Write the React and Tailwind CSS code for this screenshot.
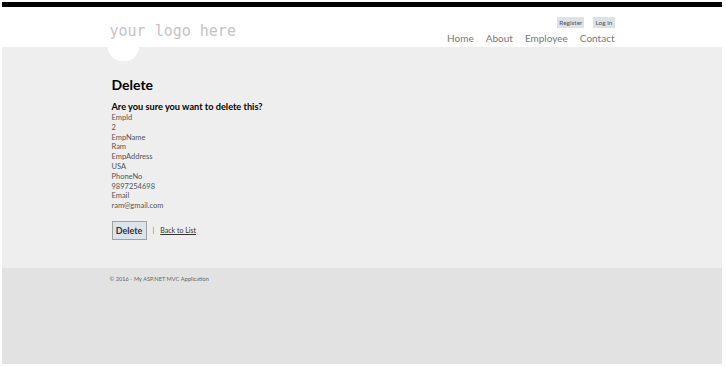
import React from 'react';

const fields = [
  ['EmpId', '2'],
  ['EmpName', 'Ram'],
  ['EmpAddress', 'USA'],
  ['PhoneNo', '9897254698'],
  ['Email', 'ram@gmail.com'],
];

function Header() {
  return (
    <header className="relative h-[40px] bg-white">
      <div className="mx-auto flex h-full w-[505px] items-start justify-between">
        <div className="relative pt-[11px]">
          <span className="text-[15px] leading-[18px] text-[#c4c4c4] [font-family:'DejaVu_Sans_Mono',monospace]">
            your logo here
          </span>
          {/* little white bump under the logo */}
          <div className="absolute left-[-2px] top-[40px] h-[14px] w-[31px] rounded-b-full bg-white" />
        </div>
        <div className="flex flex-col items-end pt-[10px]">
          <div className="flex gap-[9px] text-[6.5px] leading-[11px] text-[#555]">
            <a className="bg-[#dbe2e8] px-[2px]">Register</a>
            <a className="bg-[#dbe2e8] px-[2px]">Log in</a>
          </div>
          <nav className="mt-[3px] flex gap-[12px] text-[10px] leading-[14px] text-[#777]">
            <a>Home</a>
            <a>About</a>
            <a>Employee</a>
            <a>Contact</a>
          </nav>
        </div>
      </div>
    </header>
  );
}

export default function App() {
  return (
    <div className="flex h-[367px] flex-col bg-white pb-[3px] pl-[2px] pr-[4px] pt-[2px] [font-family:Lato,sans-serif]">
      <div className="h-[5px] bg-black" />
      <Header />
      <main className="h-[221px] bg-[#eeeeee]">
        <div className="mx-auto w-[505px] pl-[2px] pt-[29px]">
          <h2 className="text-[14px] font-bold leading-[18px] text-black">Delete</h2>
          <h3 className="mt-[7px] text-[9.2px] font-bold leading-[12px] text-black">
            Are you sure you want to delete this?
          </h3>
          <dl className="text-[7.5px] leading-[9.8px] text-[#555]">
            {fields.map(([label, value]) => (
              <React.Fragment key={label}>
                <dt>{label}</dt>
                <dd>{value}</dd>
              </React.Fragment>
            ))}
          </dl>
          <div className="mt-[10px] flex items-center gap-[6px]">
            <button className="h-[19px] w-[35px] border border-[#a0a0a0] bg-[#dde3ea] text-[9px] font-bold text-[#333]">
              Delete
            </button>
            <span className="text-[7px] text-[#777]">|</span>
            <a className="text-[7px] text-[#333] underline">Back to List</a>
          </div>
        </div>
      </main>
      <footer className="flex-1 bg-[#e2e2e2]">
        <div className="mx-auto w-[505px] pt-[7px] text-[5.7px] text-[#666]">
          © 2016 - My ASP.NET MVC Application
        </div>
      </footer>
    </div>
  );
}
